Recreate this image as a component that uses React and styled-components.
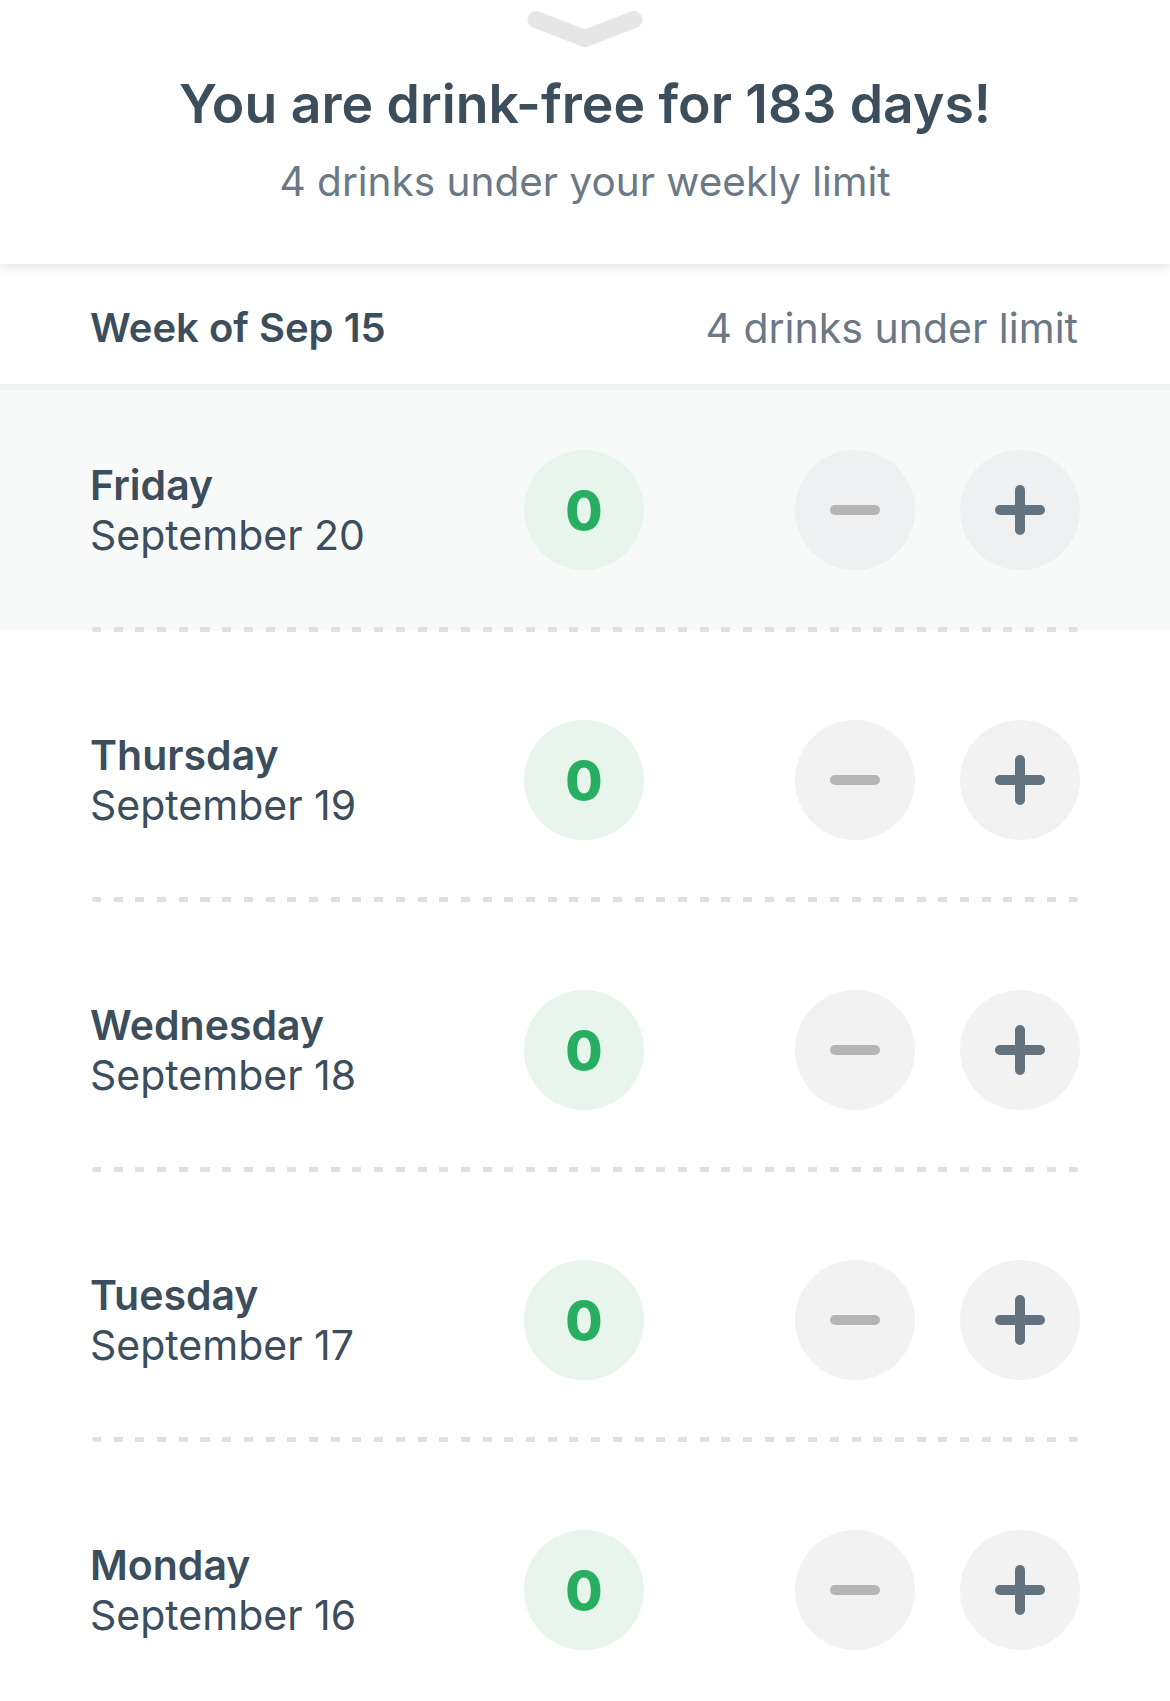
import React from "react";
import styled, { createGlobalStyle } from "styled-components";

const GlobalStyle = createGlobalStyle`
  body {
    margin: 0;
    background: #ffffff;
    font-family: Inter, "Noto Sans", sans-serif;
    color: #3c4d5c;
  }
`;

const Page = styled.div`
  width: 1170px;
  min-height: 1701px;
  background: #ffffff;
  overflow: hidden;
`;

const Header = styled.header`
  position: relative;
  z-index: 2;
  background: #ffffff;
  padding: 11px 0 57px;
  box-shadow: 0 4px 10px rgba(0, 0, 0, 0.09);
  text-align: center;
`;

const Handle = styled.svg`
  display: block;
  margin: 0 auto;
`;

const Title = styled.h1`
  margin: 25px 0 0;
  font-size: 53.5px;
  line-height: 62px;
  font-weight: 600;
  color: #3c4d5c;
`;

const Subtitle = styled.p`
  margin: 22px 0 0;
  font-size: 40.5px;
  line-height: 50px;
  font-weight: 400;
  color: #6b7885;
`;

const WeekBar = styled.div`
  display: flex;
  justify-content: space-between;
  align-items: center;
  height: 126px;
  padding: 8px 92px 0 90px;
  box-sizing: border-box;
  border-bottom: 6px solid #f1f2f3;
`;

const WeekTitle = styled.span`
  font-size: 40px;
  line-height: 50px;
  font-weight: 600;
  color: #3c4d5c;
`;

const WeekNote = styled.span`
  font-size: 41px;
  line-height: 50px;
  color: #6b7885;
`;

const DayList = styled.div`
  display: flex;
  flex-direction: column;
`;

const Day = styled.div`
  margin-top: ${(p) => (p.$first ? "0" : "28px")};
`;

const DayRow = styled.div`
  display: flex;
  align-items: center;
  height: 240px;
  padding: 0 90px 0 90px;
  background: ${(p) => (p.$today ? "#f8fafa" : "#ffffff")};
`;

const DayLabel = styled.div`
  flex: 0 0 434px;
  display: flex;
  flex-direction: column;
  font-size: 41px;
  line-height: 50px;
`;

const DayName = styled.span`
  font-weight: 600;
  color: #3c4d5c;
`;

const DayDate = styled.span`
  font-weight: 400;
  color: #3c4d5c;
`;

const Count = styled.div`
  width: 120px;
  height: 120px;
  border-radius: 50%;
  background: #e7f5ed;
  display: flex;
  align-items: center;
  justify-content: center;
  font-size: 54px;
  font-weight: 800;
  color: #27ae60;
`;

const Controls = styled.div`
  margin-left: auto;
  display: flex;
  gap: 45px;
`;

const RoundButton = styled.button`
  width: 120px;
  height: 120px;
  border-radius: 50%;
  border: none;
  padding: 0;
  background: ${(p) => (p.$today ? "#eff0f1" : "#f2f2f2")};
  display: flex;
  align-items: center;
  justify-content: center;
`;

const Dots = styled.div`
  height: 5px;
  margin: -3px 92px 0 92px;
  background: repeating-linear-gradient(
    to right,
    #dfe0e1 0 9px,
    transparent 9px 21.7px
  );
  border-radius: 3px;
`;

const days = [
  { name: "Friday", date: "September 20", today: true },
  { name: "Thursday", date: "September 19" },
  { name: "Wednesday", date: "September 18" },
  { name: "Tuesday", date: "September 17" },
  { name: "Monday", date: "September 16" },
];

function MinusIcon() {
  return (
    <svg width="50" height="10" viewBox="0 0 50 10">
      <line x1="5" y1="5" x2="45" y2="5" stroke="#b5b5b5" strokeWidth="10" strokeLinecap="round" />
    </svg>
  );
}

function PlusIcon() {
  return (
    <svg width="50" height="50" viewBox="0 0 50 50">
      <g stroke="#637380" strokeWidth="10" strokeLinecap="round">
        <line x1="5" y1="25" x2="45" y2="25" />
        <line x1="25" y1="5" x2="25" y2="45" />
      </g>
    </svg>
  );
}

export default function App() {
  return (
    <Page>
      <GlobalStyle />
      <Header>
        <Handle width="116" height="37" viewBox="0 0 116 37">
          <polyline
            points="9,8.5 58,27.5 107,8.5"
            fill="none"
            stroke="#e6e6e6"
            strokeWidth="17"
            strokeLinecap="round"
            strokeLinejoin="round"
          />
        </Handle>
        <Title>You are drink-free for 183 days!</Title>
        <Subtitle>4 drinks under your weekly limit</Subtitle>
      </Header>
      <WeekBar>
        <WeekTitle>Week of Sep 15</WeekTitle>
        <WeekNote>4 drinks under limit</WeekNote>
      </WeekBar>
      <DayList>
        {days.map((d, i) => (
          <Day key={d.name} $first={i === 0}>
            <DayRow $today={d.today}>
              <DayLabel>
                <DayName>{d.name}</DayName>
                <DayDate>{d.date}</DayDate>
              </DayLabel>
              <Count>0</Count>
              <Controls>
                <RoundButton $today={d.today} aria-label="Remove drink">
                  <MinusIcon />
                </RoundButton>
                <RoundButton $today={d.today} aria-label="Add drink">
                  <PlusIcon />
                </RoundButton>
              </Controls>
            </DayRow>
            {i < days.length - 1 && <Dots />}
          </Day>
        ))}
      </DayList>
    </Page>
  );
}
